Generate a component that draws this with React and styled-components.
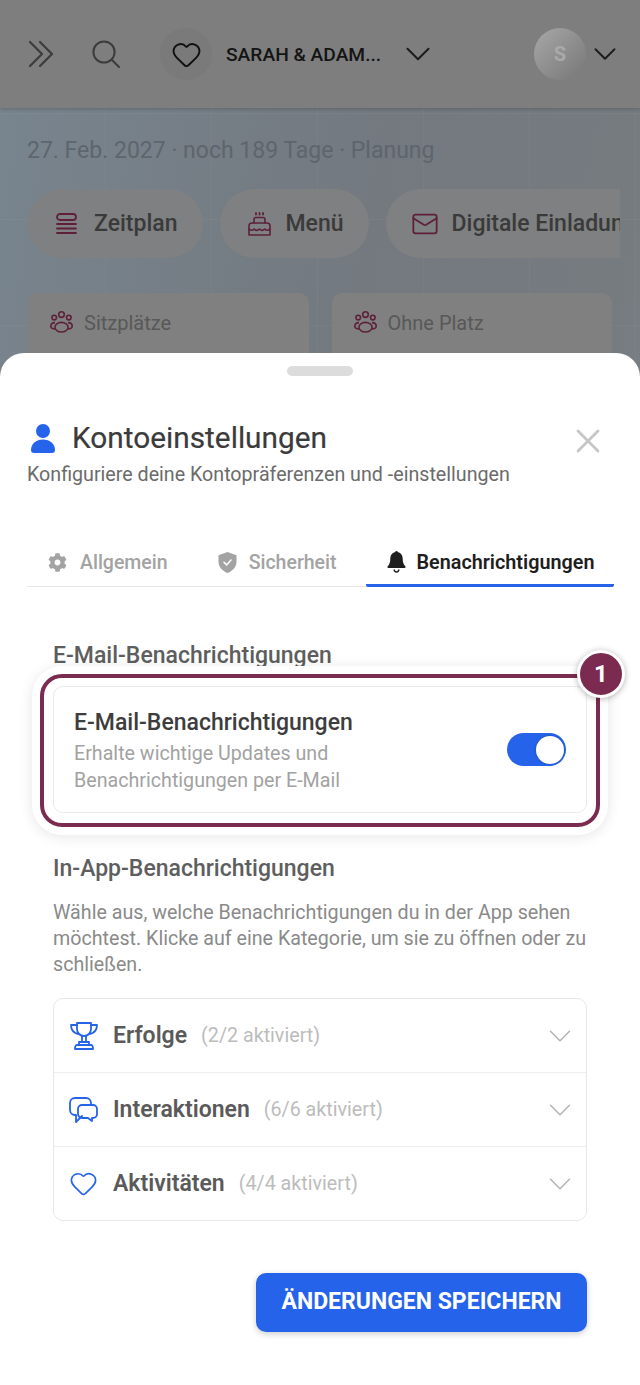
import React from "react";
import styled, { createGlobalStyle } from "styled-components";
import { ChevronDown, Heart, Mail, X } from "lucide-react";
import { FaCog } from "react-icons/fa";

const Global = createGlobalStyle`
  html, body { margin: 0; padding: 0; background: #7e7e7e; }
  * { box-sizing: border-box; }
  body { font-family: Roboto, "Liberation Sans", sans-serif; }
`;

const Stage = styled.div`
  position: relative;
  width: 640px;
  height: 1385px;
  overflow: hidden;
  display: flex;
  flex-direction: column;
`;

const TopBar = styled.header`
  height: 108px;
  flex: none;
  display: flex;
  align-items: center;
  padding: 0 16px 0 28px;
  background: #7e7e7e;
  box-shadow: 0 1px 4px rgba(0, 0, 0, 0.2);
  position: relative;
  color: #262626;
`;

const IconSlot = styled.span`
  display: inline-flex;
  flex: none;
  margin-left: ${(p) => p.$ml || 0}px;
`;

const HeartCircle = styled.span`
  width: 52px;
  height: 52px;
  margin-left: 40px;
  border-radius: 50%;
  background: #7a7a7a;
  display: flex;
  align-items: center;
  justify-content: center;
  flex: none;
  color: #111;
`;

const EventName = styled.span`
  margin-left: 14px;
  font-size: 19.2px;
  font-weight: 500;
  color: #141414;
  white-space: nowrap;
`;

const Avatar = styled.span`
  margin-left: auto;
  width: 52px;
  height: 52px;
  border-radius: 50%;
  background: linear-gradient(135deg, #a8a8a8, #767676);
  color: #a9a9a9;
  font-size: 20px;
  font-weight: 700;
  display: flex;
  align-items: center;
  justify-content: center;
  flex: none;
`;

const Dash = styled.main`
  flex: 1;
  padding: 28px 28px 0 27px;
  background:
    repeating-linear-gradient(90deg, transparent 0 105px, rgba(255, 255, 255, 0.03) 105px 106px),
    repeating-linear-gradient(0deg, transparent 0 105px, rgba(255, 255, 255, 0.03) 105px 106px),
    linear-gradient(100deg, #78848e 0%, #73797f 45%, #767b80 75%, #828a90 100%);
`;

const DateLine = styled.div`
  font-size: 23px;
  line-height: 30px;
  color: #5e656c;
`;

const PillRow = styled.div`
  margin: 23px 0 0 1px;
  width: 592px;
  display: flex;
  gap: 17px;
  overflow: hidden;
`;

const Pill = styled.div`
  height: 69px;
  border-radius: 35px;
  background: #7f8081;
  display: flex;
  align-items: center;
  gap: ${(p) => p.$gap}px;
  padding: 0 ${(p) => p.$right}px 0 ${(p) => p.$left}px;
  font-size: 23px;
  font-weight: 500;
  color: #3a3a3a;
  white-space: nowrap;
  flex: none;
`;

const CardRow = styled.div`
  margin: 35px 0 0 1px;
  display: flex;
  gap: 23px;
`;

const StatCard = styled.div`
  width: 281px;
  height: 90px;
  padding: 18px 22px;
  background: #808080;
  border-radius: 10px;
  display: flex;
  align-items: flex-start;
  gap: 11px;
  font-size: 20px;
  line-height: 24px;
  color: #585858;
`;

const Sheet = styled.section`
  position: absolute;
  left: 0;
  right: 0;
  top: 353px;
  bottom: 0;
  background: #fff;
  border-radius: 24px 24px 0 0;
  padding-top: 13px;
`;

const Handle = styled.div`
  width: 66px;
  height: 10px;
  margin: 0 auto;
  border-radius: 5px;
  background: #dcdcdc;
`;

const SheetHead = styled.div`
  margin-top: 45px;
  padding: 0 27px;
  position: relative;
`;

const TitleRow = styled.div`
  display: flex;
  align-items: center;
  gap: 17px;
  padding-left: 4px;
`;

const Title = styled.h2`
  margin: 0;
  font-size: 29.8px;
  line-height: 34px;
  font-weight: 400;
  color: #3b3b3b;
  -webkit-text-stroke: 0.2px #3b3b3b;
`;

const Close = styled.button`
  position: absolute;
  right: 32px;
  top: 0;
  border: 0;
  background: none;
  padding: 0;
  color: #c6c6c6;
  display: flex;
`;

const Subtitle = styled.p`
  margin: 7px 0 0;
  font-size: 19.66px;
  line-height: 26px;
  color: #6b6b6b;
`;

const Tabs = styled.nav`
  margin: 52px 27px 0;
  height: 47px;
  display: flex;
  gap: 8px;
  border-bottom: 1px solid #e6e6e6;
`;

const Tab = styled.div`
  height: 47px;
  padding: 0 ${(p) => (p.$active ? 20 : 21)}px ${(p) => (p.$active ? 0 : 3)}px 21px;
  margin-left: ${(p) => (p.$active ? "auto" : "0")};
  display: flex;
  align-items: center;
  gap: ${(p) => p.$gap}px;
  font-size: ${(p) => (p.$active ? 19.8 : 19.5)}px;
  font-weight: ${(p) => (p.$active ? 600 : 500)};
  color: ${(p) => (p.$active ? "#1e1e1e" : "#a3a3a3")};
  border-bottom: ${(p) => (p.$active ? "3px solid #2563eb" : "0")};
  border-radius: 0 0 2px 2px;
  white-space: nowrap;
  svg { color: ${(p) => (p.$active ? "#1e1e1e" : "#a3a3a3")}; }
`;

const Content = styled.div`
  padding: 55px 53px 0;
`;

const Heading = styled.h3`
  margin: 0;
  font-size: 23px;
  line-height: 28px;
  font-weight: 500;
  color: #5e5e5e;
`;

const HighlightCard = styled.div`
  position: relative;
  margin: 16px 0 42px;
  height: 127px;
  padding: 3px 20px 0 20px;
  border: 1px solid #e9e9e9;
  border-radius: 10px;
  display: flex;
  align-items: center;
  justify-content: space-between;
`;

const Ring = styled.div`
  position: absolute;
  inset: -13px -14px -15px -14px;
  border: 4px solid #7b2b4f;
  border-radius: 22px;
  box-shadow: 0 0 0 8px #fff, 0 2px 14px 8px rgba(0, 0, 0, 0.1);
  pointer-events: none;
`;

const Badge = styled.span`
  position: absolute;
  right: -29px;
  top: -28px;
  width: 48px;
  height: 48px;
  border-radius: 50%;
  background: #7b2b4f;
  border: 3px solid #fff;
  box-shadow: 0 1px 6px rgba(0, 0, 0, 0.3);
  color: #fff;
  font-size: 24px;
  font-weight: 700;
  display: flex;
  align-items: center;
  justify-content: center;
`;

const CardTitle = styled.div`
  font-size: 23px;
  line-height: 28px;
  font-weight: 500;
  color: #3d3d3d;
`;

const CardDesc = styled.div`
  margin-top: 3px;
  font-size: 19.66px;
  line-height: 27px;
  color: #a2a2a2;
`;

const Toggle = styled.span`
  width: 59px;
  height: 33px;
  border-radius: 17px;
  background: #2563eb;
  display: flex;
  align-items: center;
  justify-content: flex-end;
  padding-right: 2px;
  flex: none;
  margin-top: -3px;
  &::after {
    content: "";
    width: 28px;
    height: 28px;
    border-radius: 50%;
    background: #fff;
    box-shadow: 0 0 3px rgba(0, 0, 0, 0.25);
  }
`;

const Paragraph = styled.p`
  margin: 17px 0 20px;
  font-size: 19.66px;
  line-height: 26px;
  color: #8a8a8a;
`;

const Accordion = styled.div`
  border: 1px solid #e8e8e8;
  border-radius: 10px;
`;

const Row = styled.div`
  height: ${(p) => (p.$first ? 73 : 74)}px;
  display: flex;
  align-items: center;
  padding: 0 7px 0 15px;
  border-top: ${(p) => (p.$first ? "0" : "1px solid #eeeeee")};
  color: #2563eb;
`;

const RowIcon = styled.span`
  width: 29px;
  display: flex;
  justify-content: center;
  margin-right: 15px;
  flex: none;
`;

const RowLabel = styled.span`
  font-size: 23px;
  font-weight: 600;
  color: #5a5a5a;
`;

const RowCount = styled.span`
  margin-left: 14px;
  font-size: 19.7px;
  color: #bcbcbc;
`;

const RowChevron = styled.span`
  margin-left: auto;
  display: flex;
  color: #b4b4b4;
`;

const Actions = styled.div`
  margin-top: 52px;
  display: flex;
  justify-content: flex-end;
`;

const SaveButton = styled.button`
  width: 331px;
  height: 59px;
  padding: 0 0 2px;
  border: 0;
  border-radius: 10px;
  background: #2563eb;
  color: #fff;
  font-family: inherit;
  font-size: 23px;
  font-weight: 700;
  box-shadow: 0 2px 6px rgba(0, 0, 0, 0.2);
`;

const DoubleChevron = () => (
  <svg width="26" height="28" viewBox="0 0 26 28" fill="none" stroke="#3c3c3c" strokeWidth="2.2" strokeLinecap="round" strokeLinejoin="round">
    <path d="M2 2l12 12L2 26" />
    <path d="M12 2l12 12-12 12" />
  </svg>
);

const SearchGlyph = () => (
  <svg width="28" height="28" viewBox="0 0 28 28" fill="none" stroke="#3c3c3c" strokeWidth="2" strokeLinecap="round">
    <circle cx="12" cy="12" r="10.6" />
    <path d="M19.8 19.8L27 27" />
  </svg>
);

const ListGlyph = () => (
  <svg width="21" height="21" viewBox="0 0 21 21" fill="none" stroke="#5e2039" strokeWidth="1.8" strokeLinecap="round">
    <rect x="1" y="1" width="19" height="6" rx="3" />
    <path d="M1 11h19M1 15.5h19M1 20h19" />
  </svg>
);

const CakeGlyph = () => (
  <svg width="23" height="24" viewBox="0 0 23 24" fill="none" stroke="#5e2039" strokeWidth="1.6" strokeLinecap="round" strokeLinejoin="round">
    <path d="M8 1v1.5M11.5 1v1.5M15 1v1.5" strokeWidth="1.8" />
    <path d="M6 11V7.5a2 2 0 0 1 2-2h7a2 2 0 0 1 2 2V11" />
    <path d="M1 23V14a3 3 0 0 1 3-3h15a3 3 0 0 1 3 3v9z" />
    <path d="M1 17c2 1.8 3.5 1.8 5.2 0 1.8 1.8 3.5 1.8 5.3 0 1.8 1.8 3.5 1.8 5.3 0 1.7 1.8 3.2 1.8 5.2 0" />
  </svg>
);

const PeopleGlyph = () => (
  <svg width="23" height="22" viewBox="0 0 23 22" fill="none" stroke="#5e2039" strokeWidth="1.6">
    <circle cx="11.5" cy="3.6" r="2.8" />
    <circle cx="4.2" cy="6.6" r="2.3" />
    <circle cx="18.8" cy="6.6" r="2.3" />
    <ellipse cx="11.5" cy="16.2" rx="6.6" ry="4.8" />
    <path d="M5 11.6c-2.4.1-4.2 1.6-4.2 3.4S2.6 18 5.4 18M18 11.6c2.4.1 4.2 1.6 4.2 3.4S20.4 18 17.6 18" />
  </svg>
);

const PersonGlyph = () => (
  <svg width="24" height="29" viewBox="0 0 24 29" fill="#2563eb">
    <circle cx="12" cy="7" r="7" />
    <path d="M0 26c0-6 5-10.500 12-10.500S24 20 24 26c0 2-1 3-3 3H3c-2 0-3-1-3-3z" />
  </svg>
);

const ShieldGlyph = () => (
  <svg width="19" height="21" viewBox="0 0 19 21">
    <path d="M9.500 0l9 3.200v6.300c0 5.200-3.600 9.500-9 11.500-5.400-2-9-6.300-9-11.500V3.200z" fill="#a3a3a3" />
    <path d="M6 10.300l2.600 2.600 4.400-4.800" fill="none" stroke="#fff" strokeWidth="1.500" strokeLinecap="round" strokeLinejoin="round" />
  </svg>
);

const BellGlyph = () => (
  <svg width="19" height="22" viewBox="0 0 19 22">
    <circle cx="9.500" cy="1.600" r="1.600" fill="#1e1e1e" />
    <path d="M9.500 1C5.500 1 3.300 4 3.300 7.800c0 3.800-1 5.900-2.600 7.500-.6.600-.3 1.700.7 1.700h16.200c1 0 1.300-1.100.7-1.700-1.600-1.600-2.600-3.700-2.600-7.500C15.700 4 13.500 1 9.500 1z" fill="#1e1e1e" />
    <path d="M7 18.500c.3 1.400 1.300 2.500 2.500 2.500s2.200-1.100 2.500-2.500" fill="none" stroke="#1e1e1e" strokeWidth="1.300" />
  </svg>
);

const TrophyGlyph = () => (
  <svg width="28" height="28" viewBox="0 0 28 28" fill="none" stroke="#2563eb" strokeWidth="1.8" strokeLinejoin="round" strokeLinecap="round">
    <path d="M7 1h14v6c0 4-3 7-7 7s-7-3-7-7z" />
    <path d="M7 3H1c0 4.500 2.200 8 7.500 9M21 3h6c0 4.500-2.200 8-7.500 9" />
    <path d="M12 14v6M16 14v6" />
    <path d="M9 20h10v3H9z" />
    <path d="M5 27v-1c0-1.500 1-3 2-3h14c1 0 2 1.500 2 3v1z" />
  </svg>
);

const ChatGlyph = () => (
  <svg width="29" height="26" viewBox="0 0 29 26" fill="none" stroke="#2563eb" strokeWidth="1.8" strokeLinejoin="round" strokeLinecap="round">
    <path d="M22 8V6a5 5 0 0 0-5-5H6a5 5 0 0 0-5 5v7a5 5 0 0 0 5 5h1v7l6-6" />
    <path d="M13 8h11a4 4 0 0 1 4 4v5a4 4 0 0 1-4 4h-1v3l-4-3h-6a4 4 0 0 1-3-1.500c-1-1-1-1.500-1-2.500v-5a4 4 0 0 1 4-4z" />
  </svg>
);

const categories = [
  { label: "Erfolge", count: "(2/2 aktiviert)", icon: <TrophyGlyph /> },
  { label: "Interaktionen", count: "(6/6 aktiviert)", icon: <ChatGlyph /> },
  { label: "Aktivitäten", count: "(4/4 aktiviert)", icon: <Heart size={31} strokeWidth={1.4} /> },
];

export default function App() {
  return (
    <Stage>
      <Global />
      <TopBar>
        <DoubleChevron />
        <IconSlot $ml={38}><SearchGlyph /></IconSlot>
        <HeartCircle><Heart size={31} strokeWidth={1.5} /></HeartCircle>
        <EventName>SARAH &amp; ADAM...</EventName>
        <IconSlot $ml={16}><ChevronDown size={42} strokeWidth={1.15} color="#1c1c1c" /></IconSlot>
        <Avatar>S</Avatar>
        <IconSlot><ChevronDown size={38} strokeWidth={1.2} color="#1c1c1c" /></IconSlot>
      </TopBar>
      <Dash>
        <DateLine>27. Feb. 2027 · noch 189 Tage · Planung</DateLine>
        <PillRow>
          <Pill $left={28} $right={26} $gap={17}><ListGlyph />Zeitplan</Pill>
          <Pill $left={28} $right={25} $gap={14}><CakeGlyph />Menü</Pill>
          <Pill $left={25} $right={26} $gap={13}><Mail size={28} strokeWidth={1.5} color="#5e2039" />Digitale Einladungen</Pill>
        </PillRow>
        <CardRow>
          <StatCard><PeopleGlyph />Sitzplätze</StatCard>
          <StatCard><PeopleGlyph />Ohne Platz</StatCard>
        </CardRow>
      </Dash>
      <Sheet>
        <Handle />
        <SheetHead>
          <TitleRow><PersonGlyph /><Title>Kontoeinstellungen</Title></TitleRow>
          <Close aria-label="Schließen"><X size={40} strokeWidth={1.7} /></Close>
          <Subtitle>Konfiguriere deine Kontopräferenzen und -einstellungen</Subtitle>
        </SheetHead>
        <Tabs>
          <Tab $gap={13}><FaCog size={19} />Allgemein</Tab>
          <Tab $gap={12}><ShieldGlyph />Sicherheit</Tab>
          <Tab $active $gap={11}><BellGlyph />Benachrichtigungen</Tab>
        </Tabs>
        <Content>
          <Heading>E-Mail-Benachrichtigungen</Heading>
          <HighlightCard>
            <div>
              <CardTitle>E-Mail-Benachrichtigungen</CardTitle>
              <CardDesc>Erhalte wichtige Updates und<br />Benachrichtigungen per E-Mail</CardDesc>
            </div>
            <Toggle />
            <Ring><Badge>1</Badge></Ring>
          </HighlightCard>
          <Heading>In-App-Benachrichtigungen</Heading>
          <Paragraph>Wähle aus, welche Benachrichtigungen du in der App sehen möchtest. Klicke auf eine Kategorie, um sie zu öffnen oder zu schließen.</Paragraph>
          <Accordion>
            {categories.map((c, i) => (
              <Row key={c.label} $first={i === 0}>
                <RowIcon>{c.icon}</RowIcon>
                <RowLabel>{c.label}</RowLabel>
                <RowCount>{c.count}</RowCount>
                <RowChevron><ChevronDown size={38} strokeWidth={1} /></RowChevron>
              </Row>
            ))}
          </Accordion>
          <Actions><SaveButton>ÄNDERUNGEN SPEICHERN</SaveButton></Actions>
        </Content>
      </Sheet>
    </Stage>
  );
}
